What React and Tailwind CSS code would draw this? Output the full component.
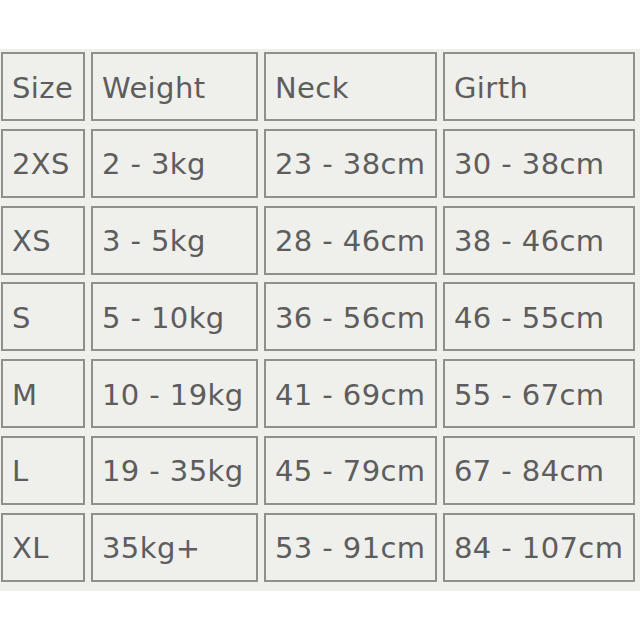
const rows = [
  ['Size', 'Weight', 'Neck', 'Girth'],
  ['2XS', '2 - 3kg', '23 - 38cm', '30 - 38cm'],
  ['XS', '3 - 5kg', '28 - 46cm', '38 - 46cm'],
  ['S', '5 - 10kg', '36 - 56cm', '46 - 55cm'],
  ['M', '10 - 19kg', '41 - 69cm', '55 - 67cm'],
  ['L', '19 - 35kg', '45 - 79cm', '67 - 84cm'],
  ['XL', '35kg+', '53 - 91cm', '84 - 107cm'],
];

export default function App() {
  return (
    <div className="w-[640px] h-[640px] bg-white pt-[49px]">
      <div className="bg-[#efefeb] pt-[3px] pl-px pb-[9px]">
        <div
          className="grid grid-cols-[84px_167px_173px_192px] auto-rows-[69px] gap-x-[6px] gap-y-[7.8px] text-[29px] tracking-[0.4px] text-[#5d5d5d]"
          style={{ fontFamily: '"DejaVu Sans", Verdana, sans-serif' }}
        >
          {rows.map((row, i) =>
            row.map((cell, j) => (
              <div
                key={i + '-' + j}
                className="flex items-center border-2 border-[#8f8f8b] pl-[9px] pt-[3px] whitespace-nowrap leading-none"
              >
                {cell}
              </div>
            ))
          )}
        </div>
      </div>
    </div>
  );
}
